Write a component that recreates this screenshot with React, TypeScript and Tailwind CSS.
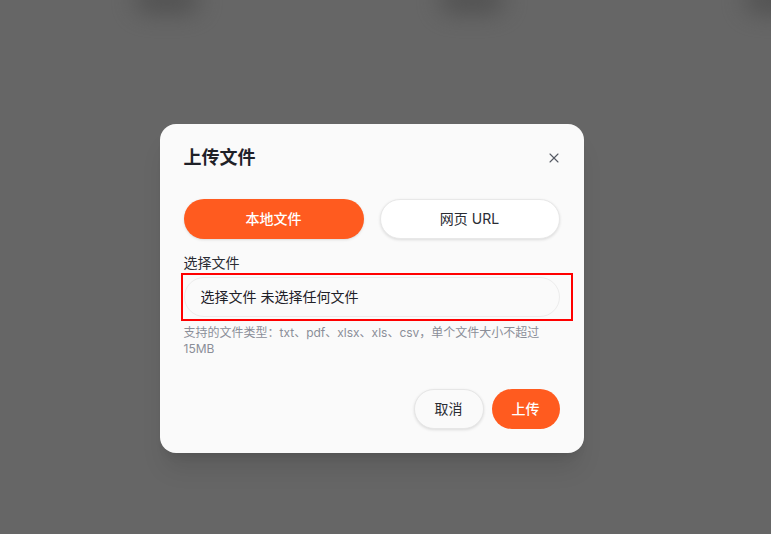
import { X } from 'lucide-react';

const FONT = { fontFamily: 'Inter, "Noto Sans CJK SC", "Noto Sans", sans-serif' };

export default function App() {
  return (
    <div className="relative h-[534px] w-[771px] overflow-hidden bg-[#666666]" style={FONT}>
      {/* blurred page content behind the overlay */}
      <div className="absolute -top-3 left-[135px] h-6 w-16 rounded-full bg-[#3f3f3f] opacity-60 blur-md" />
      <div className="absolute -top-3 left-[440px] h-6 w-16 rounded-full bg-[#3f3f3f] opacity-60 blur-md" />
      <div className="absolute -top-3 left-[745px] h-6 w-16 rounded-full bg-[#3f3f3f] opacity-60 blur-md" />

      <div className="flex h-full w-full items-start justify-center pt-[124px] pr-7">
        <div className="w-[424px] rounded-2xl bg-[#fafafa] px-6 pt-6 pb-6 shadow-xl">
          {/* Header */}
          <div className="flex items-center justify-between">
            <h2 className="text-[18px] font-bold leading-5 text-[#1f2128]">上传文件</h2>
            <button className="-mr-0.5 text-[#555a63]">
              <X className="h-4 w-4" strokeWidth={1.6} />
            </button>
          </div>

          {/* Tabs */}
          <div className="mt-[31px] grid grid-cols-2 gap-4">
            <button className="h-10 rounded-full bg-[#ff5b1f] text-sm font-medium text-white shadow-sm">
              本地文件
            </button>
            <button className="h-10 rounded-full border border-[#e8e8e8] bg-white text-sm text-[#2a2c33] shadow-[0_1px_3px_rgba(0,0,0,0.12)]">
              网页 URL
            </button>
          </div>

          {/* File field */}
          <div className="mt-3.5 text-sm leading-5 text-[#2a2c33]">选择文件</div>
          <div className="relative mt-1">
            <div className="flex h-10 items-center rounded-full border border-[#ececec] bg-[#fafafa] pl-4 text-sm text-[#1f2128]">
              选择文件 未选择任何文件
            </div>
            <div className="pointer-events-none absolute -top-[4px] -bottom-[4px] -left-[3px] -right-[13px] border-2 border-[#ff0000]" />
          </div>
          <p className="mt-2 text-xs leading-4 text-[#8a8e98]">
            支持的文件类型：txt、pdf、xlsx、xls、csv，单个文件大小不超过15MB
          </p>

          {/* Footer */}
          <div className="mt-8 flex justify-end gap-2">
            <button className="h-10 rounded-full border border-[#e6e6e6] bg-[#fafafa] px-5 text-sm text-[#2a2c33] shadow-[0_1px_3px_rgba(0,0,0,0.12)]">
              取消
            </button>
            <button className="h-10 rounded-full bg-[#ff5b1f] px-5 text-sm font-medium text-white">
              上传
            </button>
          </div>
        </div>
      </div>
    </div>
  );
}
